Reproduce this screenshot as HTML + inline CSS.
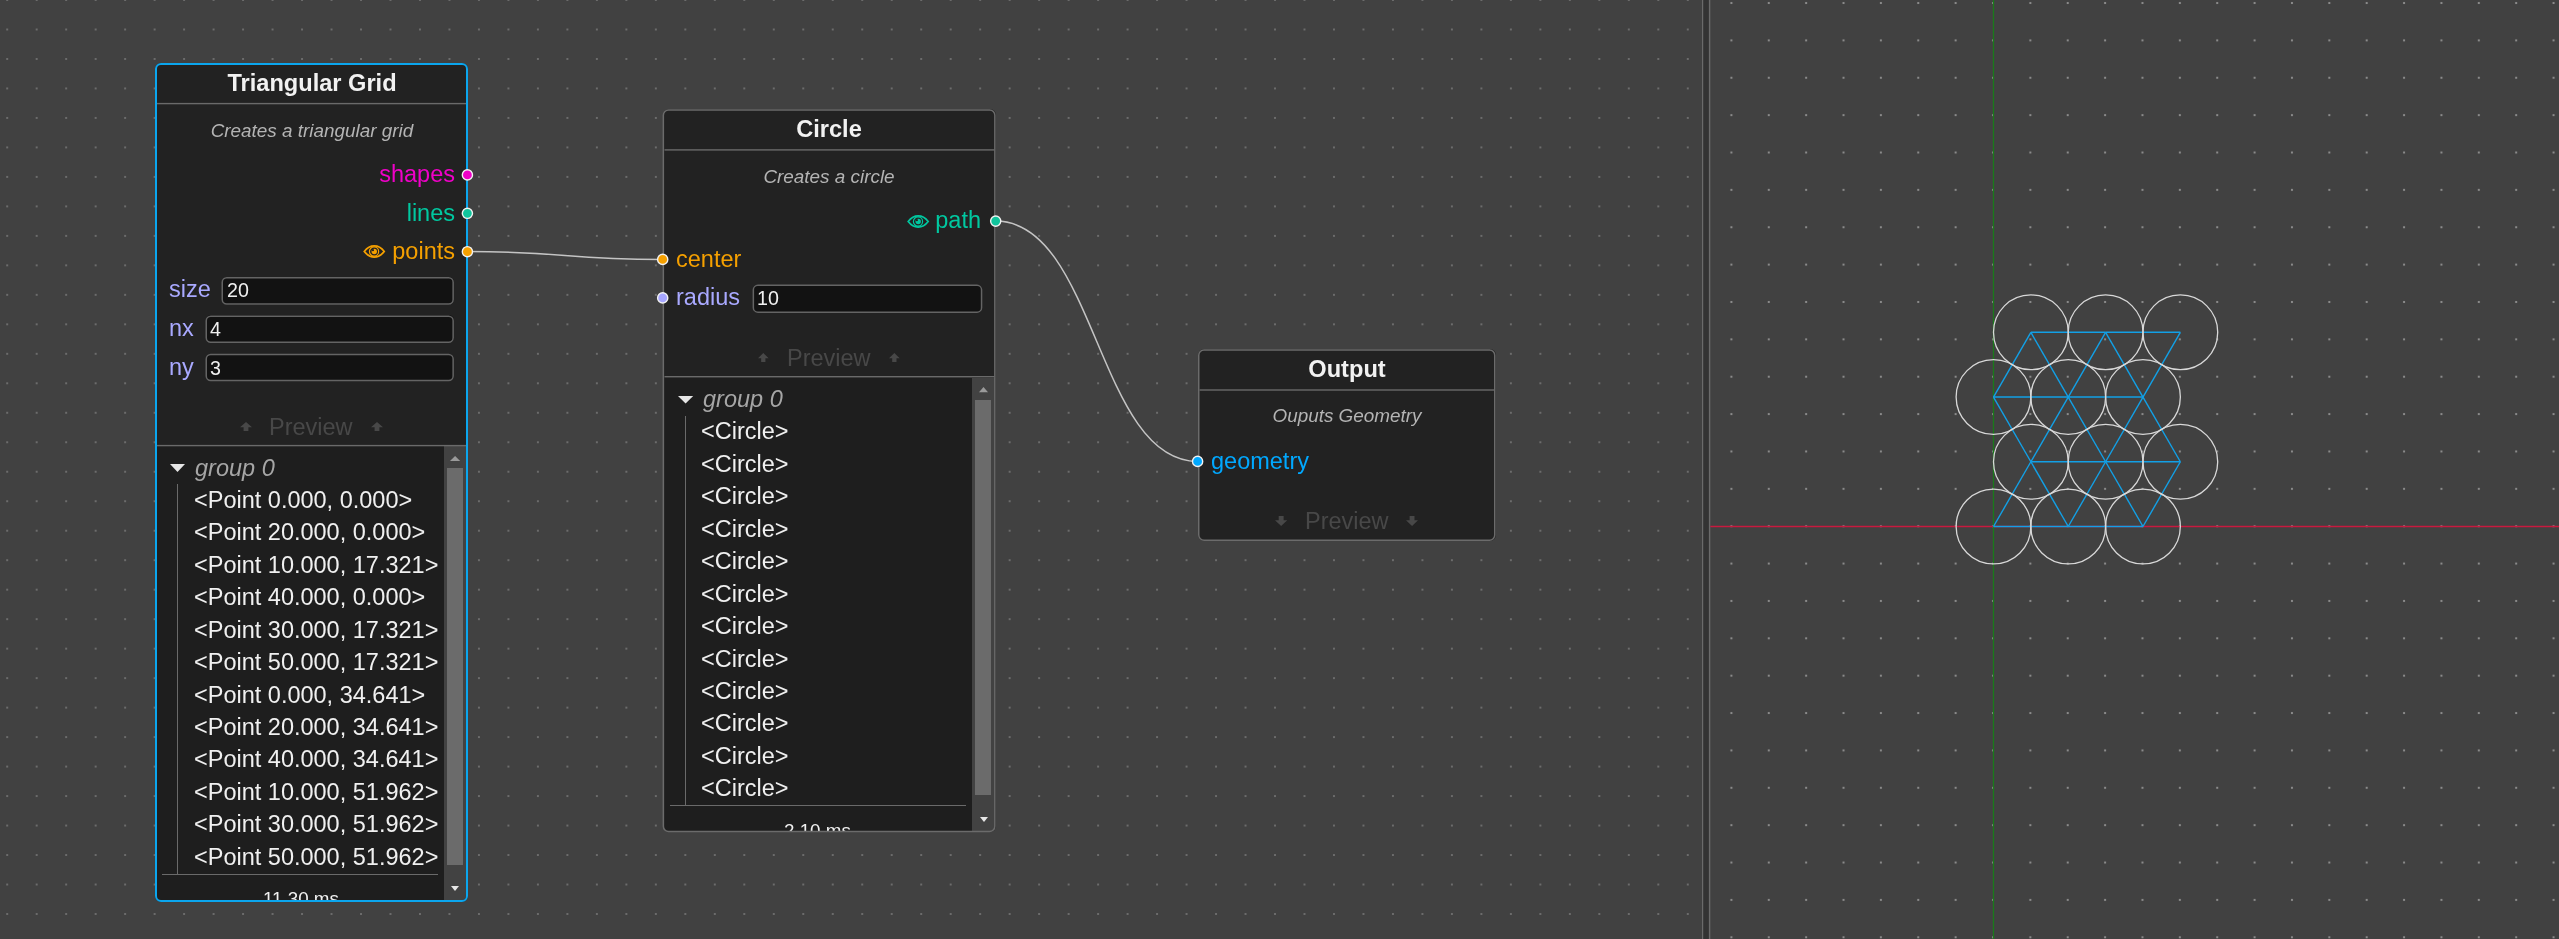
<!DOCTYPE html>
<html><head><meta charset="utf-8"><style>
html,body{margin:0;padding:0;}
body{width:2559px;height:939px;overflow:hidden;background:#414141;position:relative;font-family:"Liberation Sans", sans-serif;}
.t{position:absolute;line-height:0;white-space:pre;will-change:transform;}
.r{position:absolute;}
.n{position:absolute;box-sizing:border-box;background:#222222;border-radius:6px;}
.f{position:absolute;box-sizing:border-box;background:#121212;border-radius:5px;}
.clip{position:absolute;overflow:hidden;}
svg.bg,svg.ov{position:absolute;left:0;top:0;}
</style></head><body>
<svg class="bg" width="2559" height="939"><defs><pattern id="dl" patternUnits="userSpaceOnUse" x="7.2" y="0" width="29.484" height="29.484"><rect x="-0.75" y="-0.75" width="1.5" height="1.5" fill="#8a8a8a"/><rect x="28.734" y="-0.75" width="1.5" height="1.5" fill="#8a8a8a"/><rect x="-0.75" y="28.734" width="1.5" height="1.5" fill="#8a8a8a"/><rect x="28.734" y="28.734" width="1.5" height="1.5" fill="#8a8a8a"/></pattern><pattern id="dr" patternUnits="userSpaceOnUse" x="12.390" y="3.020" width="37.370" height="37.370"><rect x="-1" y="-1" width="2" height="2" fill="#8a8a8a"/><rect x="36.370" y="-1" width="2" height="2" fill="#8a8a8a"/><rect x="-1" y="36.370" width="2" height="2" fill="#8a8a8a"/><rect x="36.370" y="36.370" width="2" height="2" fill="#8a8a8a"/></pattern></defs><rect x="0" y="0" width="1702" height="939" fill="url(#dl)"/><rect x="1710" y="0" width="849" height="939" fill="url(#dr)"/><rect x="1702" y="0" width="1.4" height="939" fill="#6a6a6a"/><rect x="1703.4" y="0" width="5.5" height="939" fill="#333333"/><rect x="1708.9" y="0" width="1.4" height="939" fill="#6a6a6a"/><line x1="1710.3" y1="526.5" x2="2559" y2="526.5" stroke="#c8193f" stroke-width="1.3"/><line x1="1993.5" y1="0" x2="1993.5" y2="939" stroke="#1a7a1a" stroke-width="1.3"/><line x1="1993.50" y1="526.50" x2="2068.24" y2="526.50" stroke="#12a0e6" stroke-width="1.4"/><line x1="1993.50" y1="526.50" x2="2030.87" y2="461.77" stroke="#12a0e6" stroke-width="1.4"/><line x1="2068.24" y1="526.50" x2="2142.98" y2="526.50" stroke="#12a0e6" stroke-width="1.4"/><line x1="2068.24" y1="526.50" x2="2030.87" y2="461.77" stroke="#12a0e6" stroke-width="1.4"/><line x1="2068.24" y1="526.50" x2="2105.61" y2="461.77" stroke="#12a0e6" stroke-width="1.4"/><line x1="2142.98" y1="526.50" x2="2105.61" y2="461.77" stroke="#12a0e6" stroke-width="1.4"/><line x1="2142.98" y1="526.50" x2="2180.35" y2="461.77" stroke="#12a0e6" stroke-width="1.4"/><line x1="2030.87" y1="461.77" x2="2105.61" y2="461.77" stroke="#12a0e6" stroke-width="1.4"/><line x1="2030.87" y1="461.77" x2="1993.50" y2="397.05" stroke="#12a0e6" stroke-width="1.4"/><line x1="2030.87" y1="461.77" x2="2068.24" y2="397.05" stroke="#12a0e6" stroke-width="1.4"/><line x1="2105.61" y1="461.77" x2="2180.35" y2="461.77" stroke="#12a0e6" stroke-width="1.4"/><line x1="2105.61" y1="461.77" x2="2068.24" y2="397.05" stroke="#12a0e6" stroke-width="1.4"/><line x1="2105.61" y1="461.77" x2="2142.98" y2="397.05" stroke="#12a0e6" stroke-width="1.4"/><line x1="2180.35" y1="461.77" x2="2142.98" y2="397.05" stroke="#12a0e6" stroke-width="1.4"/><line x1="1993.50" y1="397.05" x2="2068.24" y2="397.05" stroke="#12a0e6" stroke-width="1.4"/><line x1="1993.50" y1="397.05" x2="2030.87" y2="332.32" stroke="#12a0e6" stroke-width="1.4"/><line x1="2068.24" y1="397.05" x2="2142.98" y2="397.05" stroke="#12a0e6" stroke-width="1.4"/><line x1="2068.24" y1="397.05" x2="2030.87" y2="332.32" stroke="#12a0e6" stroke-width="1.4"/><line x1="2068.24" y1="397.05" x2="2105.61" y2="332.32" stroke="#12a0e6" stroke-width="1.4"/><line x1="2142.98" y1="397.05" x2="2105.61" y2="332.32" stroke="#12a0e6" stroke-width="1.4"/><line x1="2142.98" y1="397.05" x2="2180.35" y2="332.32" stroke="#12a0e6" stroke-width="1.4"/><line x1="2030.87" y1="332.32" x2="2105.61" y2="332.32" stroke="#12a0e6" stroke-width="1.4"/><line x1="2105.61" y1="332.32" x2="2180.35" y2="332.32" stroke="#12a0e6" stroke-width="1.4"/><circle cx="1993.50" cy="526.50" r="37.37" fill="none" stroke="#d8d8d8" stroke-width="1.3"/><circle cx="2068.24" cy="526.50" r="37.37" fill="none" stroke="#d8d8d8" stroke-width="1.3"/><circle cx="2142.98" cy="526.50" r="37.37" fill="none" stroke="#d8d8d8" stroke-width="1.3"/><circle cx="2030.87" cy="461.77" r="37.37" fill="none" stroke="#d8d8d8" stroke-width="1.3"/><circle cx="2105.61" cy="461.77" r="37.37" fill="none" stroke="#d8d8d8" stroke-width="1.3"/><circle cx="2180.35" cy="461.77" r="37.37" fill="none" stroke="#d8d8d8" stroke-width="1.3"/><circle cx="1993.50" cy="397.05" r="37.37" fill="none" stroke="#d8d8d8" stroke-width="1.3"/><circle cx="2068.24" cy="397.05" r="37.37" fill="none" stroke="#d8d8d8" stroke-width="1.3"/><circle cx="2142.98" cy="397.05" r="37.37" fill="none" stroke="#d8d8d8" stroke-width="1.3"/><circle cx="2030.87" cy="332.32" r="37.37" fill="none" stroke="#d8d8d8" stroke-width="1.3"/><circle cx="2105.61" cy="332.32" r="37.37" fill="none" stroke="#d8d8d8" stroke-width="1.3"/><circle cx="2180.35" cy="332.32" r="37.37" fill="none" stroke="#d8d8d8" stroke-width="1.3"/></svg>
<div class="n" style="left:155px;top:63px;width:313px;height:839px;"></div><div class="t" style="left:11.70px;width:600px;text-align:center;top:83.02px;font-size:23.6px;color:#f2f2f2;font-weight:bold;font-style:normal;">Triangular Grid</div><div class="t" style="left:12.40px;width:600px;text-align:center;top:130.95px;font-size:18.9px;color:#b4b4b4;font-weight:normal;font-style:italic;">Creates a triangular grid</div><div class="t" style="left:-144.80px;width:600px;text-align:right;top:174.46px;font-size:23.5px;color:#f000c8;font-weight:normal;font-style:normal;">shapes</div><div class="t" style="left:-144.80px;width:600px;text-align:right;top:212.96px;font-size:23.5px;color:#00c8a0;font-weight:normal;font-style:normal;">lines</div><div class="t" style="left:-144.80px;width:600px;text-align:right;top:250.66px;font-size:23.5px;color:#f5a000;font-weight:normal;font-style:normal;">points</div><svg class="r" style="left:362.5px;top:245px;overflow:visible" width="22.50" height="13.00" viewBox="0 0 22.4 13"><path d="M1.2 6.5 Q5.5 0.9 11.2 0.9 Q16.9 0.9 21.2 6.5 Q16.9 12.1 11.2 12.1 Q5.5 12.1 1.2 6.5Z" fill="none" stroke="#f5a000" stroke-width="1.7"/><circle cx="11" cy="6.5" r="4.6" fill="none" stroke="#f5a000" stroke-width="1.2"/><circle cx="11.2" cy="6.5" r="2.7" fill="#f5a000"/><circle cx="9.9" cy="5.2" r="1.1" fill="#222"/></svg><div class="t" style="left:168.80px;top:288.66px;font-size:23.5px;color:#a9a9ff;font-weight:normal;font-style:normal;">size</div><div class="t" style="left:168.80px;top:328.16px;font-size:23.5px;color:#a9a9ff;font-weight:normal;font-style:normal;">nx</div><div class="t" style="left:168.80px;top:366.66px;font-size:23.5px;color:#a9a9ff;font-weight:normal;font-style:normal;">ny</div><div class="f" style="left:221.5px;top:277px;width:232.39999999999998px;height:27.80000000000001px;"></div><div class="t" style="left:226.80px;top:289.99px;font-size:19.66px;color:#f0f0f0;font-weight:normal;font-style:normal;">20</div><div class="f" style="left:205.5px;top:315.4px;width:248.39999999999998px;height:27.700000000000045px;"></div><div class="t" style="left:209.70px;top:329.49px;font-size:19.66px;color:#f0f0f0;font-weight:normal;font-style:normal;">4</div><div class="f" style="left:205.5px;top:353.7px;width:248.39999999999998px;height:27.5px;"></div><div class="t" style="left:209.70px;top:367.99px;font-size:19.66px;color:#f0f0f0;font-weight:normal;font-style:normal;">3</div><div class="t" style="left:268.90px;top:426.66px;font-size:23.5px;color:#484848;font-weight:normal;font-style:normal;">Preview</div><svg class="r" style="left:240px;top:422px" width="12.00" height="9.00"><path d="M6.00 0 L12.00 5.22 L8.40 5.22 L8.40 9.00 L3.60 9.00 L3.60 5.22 L0 5.22Z" fill="#484848"/></svg><svg class="r" style="left:371px;top:422px" width="12.00" height="9.00"><path d="M6.00 0 L12.00 5.22 L8.40 5.22 L8.40 9.00 L3.60 9.00 L3.60 5.22 L0 5.22Z" fill="#484848"/></svg><div class="clip" style="left:157px;top:446px;width:309px;height:454px;border-radius:0 0 4px 4px"><div class="r" style="left:0px;top:0px;width:287px;height:454px;background:#1e1e1e;"></div><div class="r" style="left:287px;top:0px;width:22px;height:454px;background:#424242;"></div><div class="r" style="left:290px;top:22px;width:16px;height:397px;background:#6b6b6b;"></div><svg class="r" style="left:292.8px;top:10px;overflow:visible" width="10.20" height="5.10"><path d="M0 5.1 L5.099999999999994 0 L10.199999999999989 5.1Z" fill="#9a9a9a"/></svg><svg class="r" style="left:293.5px;top:440px;overflow:visible" width="8.00" height="5.00"><path d="M0 0 L8.0 0 L4.0 5Z" fill="#e6e6e6"/></svg><svg class="r" style="left:13px;top:18.3px;overflow:visible" width="15.00" height="7.90"><path d="M0 0 L15 0 L7.5 7.899999999999999Z" fill="#e6e6e6"/></svg><div class="t" style="left:38.40px;top:21.86px;font-size:23.5px;color:#a6a6a6;font-weight:normal;font-style:italic;">group 0</div><div class="r" style="left:20.1px;top:38.4px;width:1.2999999999999972px;height:390.40000000000003px;background:#6a6a6a;"></div><div class="t" style="left:36.80px;top:53.86px;font-size:23.5px;color:#f0f0f0;font-weight:normal;font-style:normal;">&lt;Point 0.000, 0.000&gt;</div><div class="t" style="left:36.80px;top:86.31px;font-size:23.5px;color:#f0f0f0;font-weight:normal;font-style:normal;">&lt;Point 20.000, 0.000&gt;</div><div class="t" style="left:36.80px;top:118.76px;font-size:23.5px;color:#f0f0f0;font-weight:normal;font-style:normal;">&lt;Point 10.000, 17.321&gt;</div><div class="t" style="left:36.80px;top:151.21px;font-size:23.5px;color:#f0f0f0;font-weight:normal;font-style:normal;">&lt;Point 40.000, 0.000&gt;</div><div class="t" style="left:36.80px;top:183.66px;font-size:23.5px;color:#f0f0f0;font-weight:normal;font-style:normal;">&lt;Point 30.000, 17.321&gt;</div><div class="t" style="left:36.80px;top:216.11px;font-size:23.5px;color:#f0f0f0;font-weight:normal;font-style:normal;">&lt;Point 50.000, 17.321&gt;</div><div class="t" style="left:36.80px;top:248.56px;font-size:23.5px;color:#f0f0f0;font-weight:normal;font-style:normal;">&lt;Point 0.000, 34.641&gt;</div><div class="t" style="left:36.80px;top:281.01px;font-size:23.5px;color:#f0f0f0;font-weight:normal;font-style:normal;">&lt;Point 20.000, 34.641&gt;</div><div class="t" style="left:36.80px;top:313.46px;font-size:23.5px;color:#f0f0f0;font-weight:normal;font-style:normal;">&lt;Point 40.000, 34.641&gt;</div><div class="t" style="left:36.80px;top:345.91px;font-size:23.5px;color:#f0f0f0;font-weight:normal;font-style:normal;">&lt;Point 10.000, 51.962&gt;</div><div class="t" style="left:36.80px;top:378.36px;font-size:23.5px;color:#f0f0f0;font-weight:normal;font-style:normal;">&lt;Point 30.000, 51.962&gt;</div><div class="t" style="left:36.80px;top:410.81px;font-size:23.5px;color:#f0f0f0;font-weight:normal;font-style:normal;">&lt;Point 50.000, 51.962&gt;</div><div class="r" style="left:5px;top:428.1px;width:276px;height:1.3999999999999773px;background:#6a6a6a;"></div><div class="t" style="left:105.70px;top:453.09px;font-size:18.8px;color:#f0f0f0;font-weight:normal;font-style:normal;">11.30 ms</div></div><div class="n" style="left:662.6px;top:109.2px;width:333.0px;height:723.0999999999999px;"></div><div class="t" style="left:528.90px;width:600px;text-align:center;top:128.92px;font-size:23.6px;color:#f2f2f2;font-weight:bold;font-style:normal;">Circle</div><div class="t" style="left:529.40px;width:600px;text-align:center;top:177.05px;font-size:18.9px;color:#b4b4b4;font-weight:normal;font-style:italic;">Creates a circle</div><svg class="r" style="left:906.5px;top:215px;overflow:visible" width="22.40" height="13.00" viewBox="0 0 22.4 13"><path d="M1.2 6.5 Q5.5 0.9 11.2 0.9 Q16.9 0.9 21.2 6.5 Q16.9 12.1 11.2 12.1 Q5.5 12.1 1.2 6.5Z" fill="none" stroke="#00c8a0" stroke-width="1.7"/><circle cx="11" cy="6.5" r="4.6" fill="none" stroke="#00c8a0" stroke-width="1.2"/><circle cx="11.2" cy="6.5" r="2.7" fill="#00c8a0"/><circle cx="9.9" cy="5.2" r="1.1" fill="#222"/></svg><div class="t" style="left:381.30px;width:600px;text-align:right;top:220.46px;font-size:23.5px;color:#00c8a0;font-weight:normal;font-style:normal;">path</div><div class="t" style="left:675.70px;top:259.36px;font-size:23.5px;color:#f5a000;font-weight:normal;font-style:normal;">center</div><div class="t" style="left:675.70px;top:296.86px;font-size:23.5px;color:#a9a9ff;font-weight:normal;font-style:normal;">radius</div><div class="f" style="left:752.6px;top:284.6px;width:229.69999999999993px;height:28.299999999999955px;"></div><div class="t" style="left:757.00px;top:298.19px;font-size:19.66px;color:#f0f0f0;font-weight:normal;font-style:normal;">10</div><div class="t" style="left:786.60px;top:357.76px;font-size:23.5px;color:#484848;font-weight:normal;font-style:normal;">Preview</div><svg class="r" style="left:758px;top:353px" width="10.60" height="9.20"><path d="M5.30 0 L10.60 5.34 L7.42 5.34 L7.42 9.20 L3.18 9.20 L3.18 5.34 L0 5.34Z" fill="#484848"/></svg><svg class="r" style="left:889px;top:353px" width="10.70" height="9.20"><path d="M5.35 0 L10.70 5.34 L7.49 5.34 L7.49 9.20 L3.21 9.20 L3.21 5.34 L0 5.34Z" fill="#484848"/></svg><div class="clip" style="left:664.5px;top:377.5px;width:330px;height:453.5px;border-radius:0 0 4px 4px"><div class="r" style="left:0px;top:0px;width:307.5px;height:454px;background:#1e1e1e;"></div><div class="r" style="left:307.5px;top:0px;width:22.5px;height:454px;background:#424242;"></div><div class="r" style="left:310.5px;top:22.3px;width:16.0px;height:395.5px;background:#6b6b6b;"></div><svg class="r" style="left:314.5px;top:9.5px;overflow:visible" width="9.00" height="5.20"><path d="M0 5.199999999999999 L4.5 0 L9.0 5.199999999999999Z" fill="#9a9a9a"/></svg><svg class="r" style="left:315px;top:439px;overflow:visible" width="8.00" height="5.00"><path d="M0 0 L8 0 L4.0 5Z" fill="#e6e6e6"/></svg><svg class="r" style="left:13.1px;top:18.5px;overflow:visible" width="15.20" height="7.40"><path d="M0 0 L15.200000000000001 0 L7.6000000000000005 7.399999999999999Z" fill="#e6e6e6"/></svg><div class="t" style="left:38.30px;top:21.26px;font-size:23.5px;color:#a6a6a6;font-weight:normal;font-style:italic;">group 0</div><div class="r" style="left:20.1px;top:38.8px;width:1.2999999999999972px;height:389.5px;background:#6a6a6a;"></div><div class="t" style="left:36.60px;top:53.86px;font-size:23.5px;color:#f0f0f0;font-weight:normal;font-style:normal;">&lt;Circle&gt;</div><div class="t" style="left:36.60px;top:86.31px;font-size:23.5px;color:#f0f0f0;font-weight:normal;font-style:normal;">&lt;Circle&gt;</div><div class="t" style="left:36.60px;top:118.76px;font-size:23.5px;color:#f0f0f0;font-weight:normal;font-style:normal;">&lt;Circle&gt;</div><div class="t" style="left:36.60px;top:151.21px;font-size:23.5px;color:#f0f0f0;font-weight:normal;font-style:normal;">&lt;Circle&gt;</div><div class="t" style="left:36.60px;top:183.66px;font-size:23.5px;color:#f0f0f0;font-weight:normal;font-style:normal;">&lt;Circle&gt;</div><div class="t" style="left:36.60px;top:216.11px;font-size:23.5px;color:#f0f0f0;font-weight:normal;font-style:normal;">&lt;Circle&gt;</div><div class="t" style="left:36.60px;top:248.56px;font-size:23.5px;color:#f0f0f0;font-weight:normal;font-style:normal;">&lt;Circle&gt;</div><div class="t" style="left:36.60px;top:281.01px;font-size:23.5px;color:#f0f0f0;font-weight:normal;font-style:normal;">&lt;Circle&gt;</div><div class="t" style="left:36.60px;top:313.46px;font-size:23.5px;color:#f0f0f0;font-weight:normal;font-style:normal;">&lt;Circle&gt;</div><div class="t" style="left:36.60px;top:345.91px;font-size:23.5px;color:#f0f0f0;font-weight:normal;font-style:normal;">&lt;Circle&gt;</div><div class="t" style="left:36.60px;top:378.36px;font-size:23.5px;color:#f0f0f0;font-weight:normal;font-style:normal;">&lt;Circle&gt;</div><div class="t" style="left:36.60px;top:410.81px;font-size:23.5px;color:#f0f0f0;font-weight:normal;font-style:normal;">&lt;Circle&gt;</div><div class="r" style="left:5.5px;top:427.6px;width:296.0px;height:1.3999999999999773px;background:#6a6a6a;"></div><div class="t" style="left:119.50px;top:453.99px;font-size:18.8px;color:#f0f0f0;font-weight:normal;font-style:normal;">2.10 ms</div></div><div class="n" style="left:1198px;top:349.3px;width:297.5px;height:191.7px;"></div><div class="t" style="left:1047.00px;width:600px;text-align:center;top:368.82px;font-size:23.6px;color:#f2f2f2;font-weight:bold;font-style:normal;">Output</div><div class="t" style="left:1047.25px;width:600px;text-align:center;top:416.15px;font-size:18.9px;color:#b4b4b4;font-weight:normal;font-style:italic;">Ouputs Geometry</div><div class="t" style="left:1210.50px;top:460.86px;font-size:23.5px;color:#00a8ff;font-weight:normal;font-style:normal;">geometry</div><div class="t" style="left:1304.70px;top:520.96px;font-size:23.5px;color:#484848;font-weight:normal;font-style:normal;">Preview</div><svg class="r" style="left:1275px;top:516px" width="12.30" height="10.00"><path d="M6.15 10.00 L12.30 4.20 L8.61 4.20 L8.61 0 L3.69 0 L3.69 4.20 L0 4.20Z" fill="#484848"/></svg><svg class="r" style="left:1406px;top:516px" width="12.10" height="10.00"><path d="M6.05 10.00 L12.10 4.20 L8.47 4.20 L8.47 0 L3.63 0 L3.63 4.20 L0 4.20Z" fill="#484848"/></svg>
<svg class="ov" width="2559" height="939"><rect x="156.0" y="64.0" width="311" height="837" rx="5.0" fill="none" stroke="#0ba6ee" stroke-width="2"/><rect x="157" y="102.89999999999999" width="309" height="1.4" fill="#6a6a6a"/><rect x="157" y="444.90000000000003" width="309" height="1.4" fill="#6a6a6a"/><rect x="222.25" y="277.75" width="230.89999999999998" height="26.30000000000001" rx="4.5" fill="none" stroke="#646464" stroke-width="1.5"/><rect x="206.25" y="316.15" width="246.89999999999998" height="26.200000000000045" rx="4.5" fill="none" stroke="#646464" stroke-width="1.5"/><rect x="206.25" y="354.45" width="246.89999999999998" height="26.0" rx="4.5" fill="none" stroke="#646464" stroke-width="1.5"/><rect x="663.35" y="109.95" width="331.5" height="721.5999999999999" rx="5.25" fill="none" stroke="#6b6b6b" stroke-width="1.5"/><rect x="664.5" y="149.20000000000002" width="330.0" height="1.4" fill="#6a6a6a"/><rect x="753.35" y="285.35" width="228.19999999999993" height="26.799999999999955" rx="4.5" fill="none" stroke="#646464" stroke-width="1.5"/><rect x="664.5" y="376.0" width="330.0" height="1.4" fill="#6a6a6a"/><rect x="1198.75" y="350.05" width="296.0" height="190.2" rx="5.25" fill="none" stroke="#6b6b6b" stroke-width="1.5"/><rect x="1199.5" y="389.3" width="294.5" height="1.4" fill="#6a6a6a"/><path d="M467.4 251.6 C567.4 251.6 562.5 259.4 662.5 259.4" fill="none" stroke="#c4c4c4" stroke-width="1.5"/><path d="M995.7 221.1 C1095.7 221.1 1097.6 461.4 1197.6 461.4" fill="none" stroke="#c4c4c4" stroke-width="1.5"/><circle cx="467.4" cy="174.9" r="5.1" fill="#f000c8" stroke="#f2f2f2" stroke-width="1.4"/><circle cx="467.4" cy="213.3" r="5.1" fill="#10c49c" stroke="#f2f2f2" stroke-width="1.4"/><circle cx="467.4" cy="251.7" r="5.1" fill="#f5a000" stroke="#f2f2f2" stroke-width="1.4"/><circle cx="995.7" cy="221.1" r="5.1" fill="#10c49c" stroke="#f2f2f2" stroke-width="1.4"/><circle cx="662.7" cy="259.4" r="5.1" fill="#f5a000" stroke="#f2f2f2" stroke-width="1.4"/><circle cx="662.7" cy="297.9" r="5.1" fill="#a6a6ff" stroke="#f2f2f2" stroke-width="1.4"/><circle cx="1197.6" cy="461.4" r="5.1" fill="#00a8ff" stroke="#f2f2f2" stroke-width="1.4"/></svg>
</body></html>
